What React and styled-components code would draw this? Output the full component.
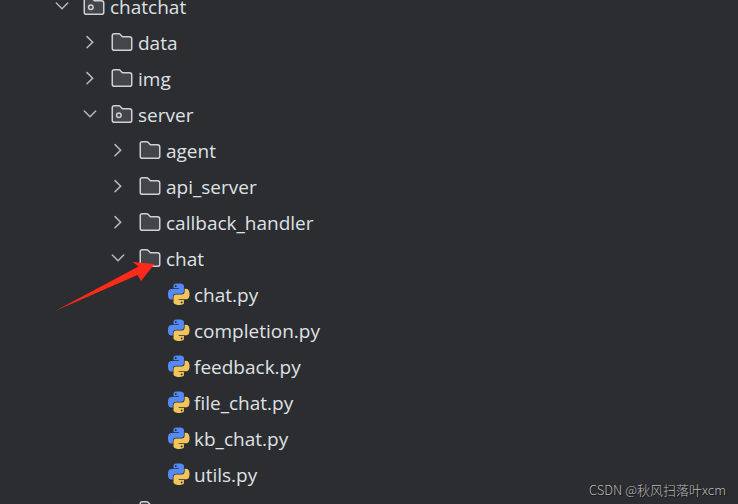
import React, { useState } from "react";
import styled, { createGlobalStyle } from "styled-components";

const GlobalStyle = createGlobalStyle`
  body {
    margin: 0;
    background-color: #2b2d30;
    font-family: "Open Sans", "Noto Sans CJK SC", sans-serif;
  }
`;

const Panel = styled.main`
  position: relative;
  height: 100vh;
  overflow: hidden;
  background-color: #2b2d30;
`;

// the list is scrolled down a little, so the first row is cut
const Tree = styled.ul`
  list-style: none;
  margin: -12px 0 0;
  padding: 0;
`;

const Row = styled.li`
  display: flex;
  align-items: center;
  height: 36px;
  padding-left: ${(props) => 50 + props.$depth * 28}px;
`;

const Toggle = styled.button`
  display: flex;
  width: 24px;
  height: 24px;
  margin-right: 8px;
  padding: 0;
  border: none;
  background: none;
  color: #b4b8bf;
  cursor: pointer;
`;

const ToggleSpace = styled.span`
  width: 32px;
`;

const Icon = styled.svg`
  flex: none;
  width: 24px;
  height: 24px;
`;

const Name = styled.span`
  margin-left: 4px;
  padding-top: 2px;
  color: #dfe1e5;
  font-size: 19px;
  line-height: 24px;
  white-space: nowrap;
`;

const Arrow = styled.svg`
  position: absolute;
  left: 50px;
  top: 256px;
  width: 110px;
  height: 60px;
  pointer-events: none;
`;

const Watermark = styled.footer`
  position: absolute;
  right: 12px;
  bottom: 4px;
  color: #b9babb;
  font-family: "Noto Sans CJK SC", sans-serif;
  font-size: 13px;
  font-weight: 300;
  line-height: 20px;
  text-shadow: 1px 1px 1px rgba(0, 0, 0, 0.5);
`;

const items = [
  { name: "chatchat", type: "package", depth: 0, open: true },
  { name: "data", type: "folder", depth: 1 },
  { name: "img", type: "folder", depth: 1 },
  { name: "server", type: "package", depth: 1, open: true },
  { name: "agent", type: "folder", depth: 2 },
  { name: "api_server", type: "folder", depth: 2 },
  { name: "callback_handler", type: "folder", depth: 2 },
  { name: "chat", type: "folder", depth: 2, open: true },
  { name: "chat.py", type: "python", depth: 3 },
  { name: "completion.py", type: "python", depth: 3 },
  { name: "feedback.py", type: "python", depth: 3 },
  { name: "file_chat.py", type: "python", depth: 3 },
  { name: "kb_chat.py", type: "python", depth: 3 },
  { name: "utils.py", type: "python", depth: 3 },
  { name: "", type: "folder", depth: 2 },
];

const Chevron = ({ open }) => (
  <Icon viewBox="0 0 16 16" fill="none" stroke="currentColor" strokeLinecap="round">
    <path d={open ? "M4.2 6L8 9.8L11.8 6" : "M6 4.4L9.8 8.1L6 11.8"} />
  </Icon>
);

const FolderIcon = ({ dot }) => (
  <Icon viewBox="0 0 16 16" fill="#43454a" stroke="#ced0d6">
    <path d="M8.1 4.35L8.25 4.5H13C13.83 4.5 14.5 5.17 14.5 6V12.13C14.5 12.95 13.93 13.5 13.2 13.5H2.8C2.07 13.5 1.5 12.95 1.5 12.13V3.87C1.5 3.05 2.07 2.5 2.8 2.5H6.12C6.26 2.5 6.39 2.56 6.48 2.65L8.1 4.35Z" />
    {dot && <circle cx="5.9" cy="8.9" r="1.5" />}
  </Icon>
);

const PythonIcon = () => (
  <Icon viewBox="-2.2 -1.6 26.8 26.8">
    <path
      fill="#548af7"
      d="M14.25.18l.9.2.73.26.59.3.45.32.34.34.25.34.16.33.1.3.04.26.02.2-.01.13V8.5l-.05.63-.13.55-.21.46-.26.38-.3.31-.33.25-.35.19-.35.14-.33.1-.3.07-.26.04-.21.02H8.77l-.69.05-.59.14-.5.22-.41.27-.33.32-.27.35-.2.36-.15.37-.1.35-.07.32-.04.27-.02.21v3.06H3.17l-.21-.03-.28-.07-.32-.12-.35-.18-.36-.26-.36-.36-.35-.46-.32-.59-.28-.73-.21-.88-.14-1.05-.05-1.23.06-1.22.16-1.04.24-.87.32-.71.36-.57.4-.44.42-.33.42-.24.4-.16.36-.1.32-.05.24-.01h.16l.06.01h8.16v-.83H6.18l-.01-2.75-.02-.37.05-.34.11-.31.17-.28.25-.26.31-.23.38-.2.44-.18.51-.15.58-.12.64-.1.71-.06.77-.04.84-.02 1.27.05zm-6.3 1.98l-.23.33-.08.41.08.41.23.34.33.22.41.09.41-.09.33-.22.23-.34.08-.41-.08-.41-.23-.33-.33-.22-.41-.09-.41.09z"
    />
    <path
      fill="#f2c55c"
      d="M21.04 6.11l.28.06.32.12.35.18.36.27.36.35.35.47.32.59.28.73.21.88.14 1.04.05 1.23-.06 1.23-.16 1.04-.24.86-.32.71-.36.57-.4.45-.42.33-.42.24-.4.16-.36.09-.32.05-.24.02-.16-.01h-8.22v.82h5.84l.01 2.76.02.36-.05.34-.11.31-.17.29-.25.25-.31.24-.38.2-.44.17-.51.15-.58.13-.64.09-.71.07-.77.04-.84.01-1.27-.04-1.07-.14-.9-.2-.73-.25-.59-.3-.45-.33-.34-.34-.25-.34-.16-.33-.1-.3-.04-.25-.02-.2.01-.13v-5.34l.05-.64.13-.54.21-.46.26-.38.3-.32.33-.24.35-.2.35-.14.33-.1.3-.06.26-.04.21-.02.13-.01h5.84l.69-.05.59-.14.5-.21.41-.28.33-.32.27-.35.2-.36.15-.36.1-.35.07-.32.04-.28.02-.21V6.07h2.09l.14.01zm-6.47 14.25l-.23.33-.08.41.08.41.23.33.33.23.41.08.41-.08.33-.23.23-.33.08-.41-.08-.41-.23-.33-.33-.23-.41-.08-.41.08z"
    />
  </Icon>
);

const App = () => {
  const [tree, setTree] = useState(items);

  const toggle = (index) => {
    setTree(tree.map((item, i) => (i === index ? { ...item, open: !item.open } : item)));
  };

  // rows under a closed folder are hidden
  let closedDepth = Infinity;
  const isVisible = (item) => {
    if (item.depth > closedDepth) return false;
    closedDepth = item.type !== "python" && !item.open ? item.depth : Infinity;
    return true;
  };

  return (
    <Panel>
      <GlobalStyle />
      <Tree>
        {tree.map((item, index) =>
          isVisible(item) ? (
            <Row key={index} $depth={item.depth}>
              {item.type === "python" ? (
                <ToggleSpace />
              ) : (
                <Toggle
                  type="button"
                  aria-label={`Toggle ${item.name || "folder"}`}
                  aria-expanded={Boolean(item.open)}
                  onClick={() => toggle(index)}
                >
                  <Chevron open={item.open} />
                </Toggle>
              )}
              {item.type === "python" ? <PythonIcon /> : <FolderIcon dot={item.type === "package"} />}
              <Name>{item.name}</Name>
            </Row>
          ) : null
        )}
      </Tree>
      <Arrow viewBox="50 256 110 60" fill="#ff2a1a">
        <path d="M55 311L138.5 266.5L132.5 262L154.5 264L141 281L137.5 275Z" />
      </Arrow>
      <Watermark>CSDN @秋风扫落叶xcm</Watermark>
    </Panel>
  );
};

export default App;
